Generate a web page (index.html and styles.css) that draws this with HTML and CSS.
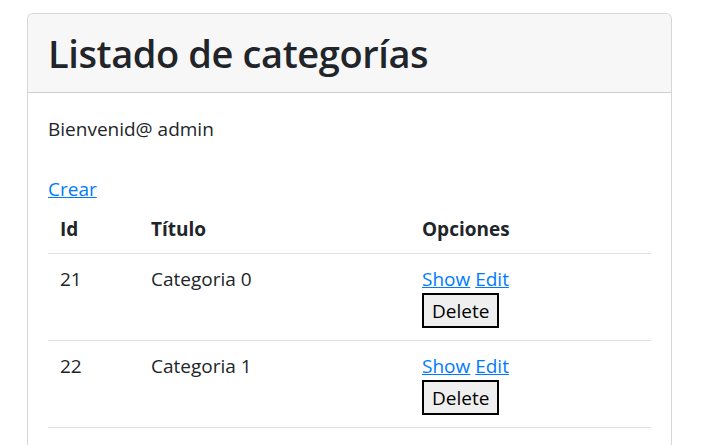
FILE: index.html
```html
<!DOCTYPE html>
<html lang="es">
<head>
<meta charset="utf-8">
<title>Listado de categorías</title>
<link rel="stylesheet" href="styles.css">
</head>
<body>
<div class="page">
  <div class="card">
    <div class="card-header">
      <h1 class="title">Listado de categorías</h1>
    </div>
    <div class="card-body">
      <p class="welcome">Bienvenid@ admin</p>
      <a class="link create" href="#">Crear</a>
      <table class="table">
        <thead>
          <tr>
            <th class="col-id">Id</th>
            <th class="col-title">Título</th>
            <th class="col-opts">Opciones</th>
          </tr>
        </thead>
        <tbody>
          <tr>
            <td>21</td>
            <td>Categoria 0</td>
            <td>
              <div class="links"><a class="link" href="#">Show</a> <a class="link" href="#">Edit</a></div>
              <form class="del-form"><button type="button" class="btn-delete">Delete</button></form>
            </td>
          </tr>
          <tr>
            <td>22</td>
            <td>Categoria 1</td>
            <td>
              <div class="links"><a class="link" href="#">Show</a> <a class="link" href="#">Edit</a></div>
              <form class="del-form"><button type="button" class="btn-delete">Delete</button></form>
            </td>
          </tr>
        </tbody>
      </table>
    </div>
  </div>
</div>
</body>
</html>
```

FILE: styles.css
```css
html, body {
  margin: 0;
  padding: 0;
  background: #fff;
}
body {
  font-family: "Open Sans", "Noto Sans", "Liberation Sans", sans-serif;
  font-size: 19px;
  color: #212529;
}
.page {
  padding: 13px 0 0 27px;
}
.card {
  width: 645px;
  box-sizing: border-box;
  border: 1px solid rgba(0, 0, 0, 0.16);
  border-radius: 6px;
  background: #fff;
}
.card-header {
  background: #f7f7f7;
  border-bottom: 1px solid rgba(0, 0, 0, 0.16);
  border-radius: 6px 6px 0 0;
  padding: 12px 20px;
}
.title {
  margin: 0;
  font-size: 38px;
  font-weight: 600;
  letter-spacing: -0.4px;
  line-height: 54px;
}
.card-body {
  padding: 21px 20px 20px;
}
.welcome {
  margin: 0 0 30px;
  line-height: 30px;
}
.link {
  color: #007bff;
  text-decoration: underline;
}
.create {
  display: block;
  line-height: 30px;
}
.table {
  width: 100%;
  border-collapse: collapse;
}
.table th,
.table td {
  text-align: left;
  vertical-align: top;
  padding: 12px;
  line-height: 26px;
  border-bottom: 1px solid #dee2e6;
}
.table th {
  font-weight: 700;
  padding-bottom: 11px;
}
.col-id { width: 67px; }
.col-title { width: 247px; }
.links {
  line-height: 26px;
}
.del-form {
  margin: 1px 0 0;
}
.btn-delete {
  display: block;
  box-sizing: border-box;
  height: 35px;
  padding: 0 8px;
  font-family: inherit;
  font-size: 19px;
  color: #000;
  background: #efefef;
  border: 2px solid #000;
  border-radius: 0;
}
```
